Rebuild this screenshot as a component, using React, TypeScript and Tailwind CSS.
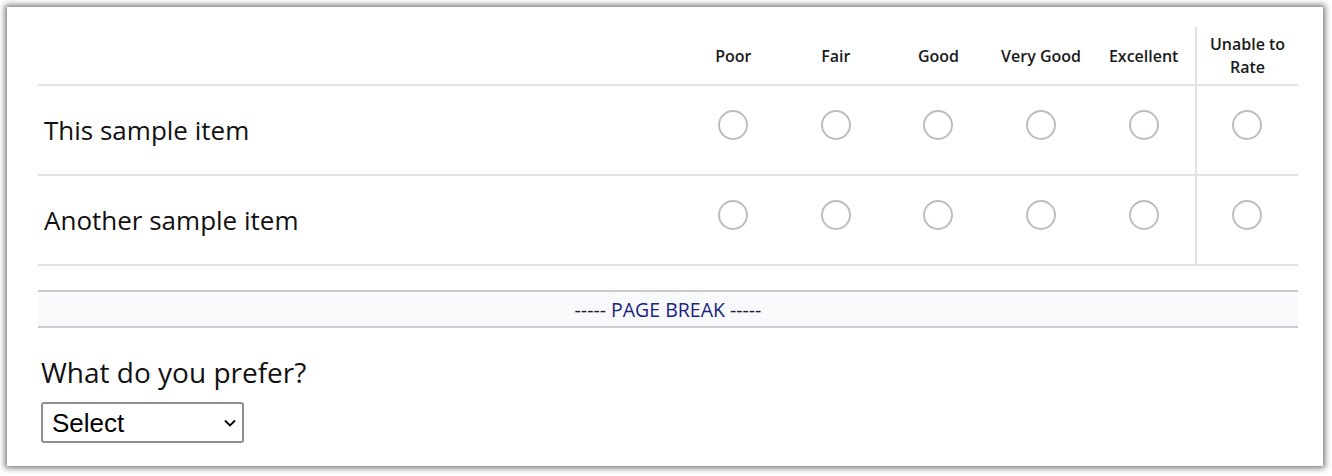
import React from "react";

const ratings = ["Poor", "Fair", "Good", "Very Good", "Excellent"];
const items = ["This sample item", "Another sample item"];

const Radio = () => (
  <span className="block w-[30px] h-[30px] rounded-full border-2 border-[#bdbdbd] bg-white mb-[10px]" />
);

export default function App() {
  return (
    <div className="bg-white w-[1332px] h-[476px] p-[7px] font-['Open_Sans',sans-serif]">
      <div className="w-[1316px] h-[459px] bg-white shadow-[0_0_6px_2px_rgba(0,0,0,0.55)] pt-[20px] px-[31px]">
        {/* matrix */}
        <div className="w-[1260px]">
          <div className="flex h-[59px] border-b-2 border-[#e2e2e2]">
            <div className="w-[644px]" />
            {ratings.map((r) => (
              <div
                key={r}
                className="w-[102.6px] flex items-center justify-center text-[16px] font-semibold text-[#1a1a1a] pt-[1px]"
              >
                {r}
              </div>
            ))}
            <div className="flex-1 border-l-2 border-[#e2e2e2] flex items-center justify-center text-center text-[16px] leading-[23px] font-semibold text-[#1a1a1a]">
              Unable to
              <br />
              Rate
            </div>
          </div>
          {items.map((it) => (
            <div key={it} className="flex h-[90px] border-b-2 border-[#e2e2e2]">
              <div className="w-[644px] flex items-center pl-[6px] text-[26px] text-[#111]">
                {it}
              </div>
              {ratings.map((r) => (
                <div key={r} className="w-[102.6px] flex items-center justify-center">
                  <Radio />
                </div>
              ))}
              <div className="flex-1 border-l-2 border-[#e2e2e2] flex items-center justify-center">
                <Radio />
              </div>
            </div>
          ))}
        </div>

        {/* page break */}
        <div className="mt-[24px] w-[1260px] h-[38px] border-y-2 border-[#cccccc] bg-[#f8f9fb] flex items-center justify-center text-[19.5px] pt-[1px]">
          <span className="text-[#1a1a3a]">-----&nbsp;</span>
          <span className="text-[#1a237e]">PAGE BREAK</span>
          <span className="text-[#1a1a3a]">&nbsp;-----</span>
        </div>

        {/* question */}
        <div className="mt-[25px] pl-[3px] text-[28px] leading-[38px] text-[#111]">
          What do you prefer?
        </div>
        <div className="mt-[11px] pl-[3px]">
          <div className="relative w-[203px] h-[41px]">
            <select className="appearance-none w-full h-full border-2 border-[#8f8f8f] rounded-[3px] bg-white pl-[9px] text-[26px] text-black font-['Liberation_Sans',Arial,sans-serif]">
              <option>Select</option>
            </select>
            <svg
              className="absolute right-[7px] top-[16px] pointer-events-none"
              width="14"
              height="10"
              viewBox="0 0 14 10"
              fill="none"
            >
              <path d="M2 2.5 L7 7.5 L12 2.5" stroke="#000" strokeWidth="1.8" />
            </svg>
          </div>
        </div>
      </div>
    </div>
  );
}
